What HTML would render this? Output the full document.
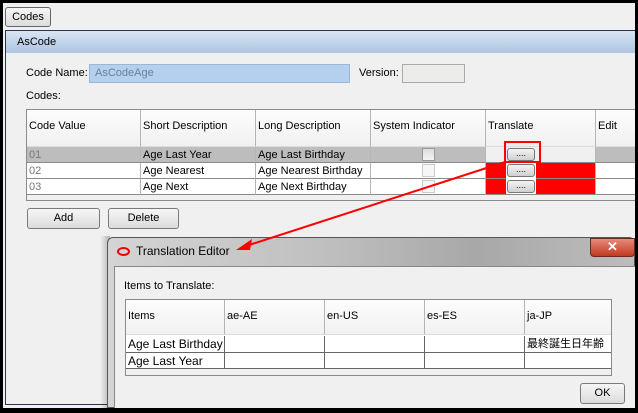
<!DOCTYPE html>
<html><head><meta charset="utf-8"><style>
*{margin:0;padding:0;box-sizing:border-box}
body{width:638px;height:413px;background:#000;position:relative;overflow:hidden;font-family:"Liberation Sans","Noto Sans CJK JP",sans-serif;font-size:11px;color:#000}
.a{position:absolute}
.cell{position:absolute;border-right:1px solid #b5b5b5;border-bottom:1px solid #8a8a8a;padding-left:2px;line-height:16px;white-space:nowrap;overflow:hidden}
.btn{position:absolute;border:1px solid #7a7a7a;border-radius:3px;background:linear-gradient(#f6f6f6,#dcdcdc);text-align:center}
.dots{position:absolute;width:28px;height:13px;border:1px solid #777;border-radius:3px;background:linear-gradient(#f4f4f4,#cfcfcf);font-size:9px;line-height:9px;text-align:center}
</style></head><body>
<div class="a" style="left:3px;top:3px;width:632px;height:405px;background:#f0f0f0"></div>
<div class="btn" style="left:5px;top:7px;width:46px;height:20px;line-height:18px;font-size:11px;border-color:#666">Codes</div>
<div class="a" style="left:5px;top:30px;width:630px;height:375px;border:1px solid #2a3550;border-right:none;background:#f0f0f0"></div>
<div class="a" style="left:6px;top:31px;width:629px;height:22px;background:linear-gradient(#d9e5f4,#aec4e0);padding-left:11px;line-height:22px;font-size:11px">AsCode</div>
<div class="a" style="left:26px;top:67px">Code Name:</div>
<div class="a" style="left:89px;top:64px;width:261px;height:19px;background:#b5d0ef;border:1px solid #9fb7d6;color:#6a7f9a;padding-left:5px;line-height:17px">AsCodeAge</div>
<div class="a" style="left:359px;top:67px">Version:</div>
<div class="a" style="left:402px;top:64px;width:63px;height:19px;background:#ececea;border:1px solid #aaa"></div>
<div class="a" style="left:26px;top:90px">Codes:</div>
<div class="a" style="left:26px;top:109px;width:610px;height:92px;border:1px solid #8a8a8a;border-right:none;background:#fff"></div>
<div class="a" style="left:27px;top:110px;width:608px;height:37px;background:linear-gradient(#fdfdfd,#f0f0f0)"></div>
<div class="cell" style="left:27px;top:110px;width:114px;height:37px;line-height:33px;border-bottom-color:#ddd">Code Value</div>
<div class="cell" style="left:141px;top:110px;width:115px;height:37px;line-height:33px;border-bottom-color:#ddd">Short Description</div>
<div class="cell" style="left:256px;top:110px;width:115px;height:37px;line-height:33px;border-bottom-color:#ddd">Long Description</div>
<div class="cell" style="left:371px;top:110px;width:115px;height:37px;line-height:33px;border-bottom-color:#ddd">System Indicator</div>
<div class="cell" style="left:486px;top:110px;width:110px;height:37px;line-height:33px;border-bottom-color:#ddd">Translate</div>
<div class="cell" style="left:596px;top:110px;width:40px;height:37px;line-height:33px;border-bottom-color:#ddd">Edit</div>
<div class="a" style="left:27px;top:147px;width:608px;height:16px;background:#bdbdbd"></div>
<div class="cell" style="left:27px;top:147px;width:114px;height:16px;color:#777">01</div>
<div class="cell" style="left:141px;top:147px;width:115px;height:16px">Age Last Year</div>
<div class="cell" style="left:256px;top:147px;width:115px;height:16px">Age Last Birthday</div>
<div class="cell" style="left:371px;top:147px;width:115px;height:16px"></div>
<div class="cell" style="left:486px;top:147px;width:110px;height:16px;background:#f0f0f0"></div>
<div class="cell" style="left:596px;top:147px;width:40px;height:16px"></div>
<div class="cell" style="left:27px;top:163px;width:114px;height:16px;color:#777">02</div>
<div class="cell" style="left:141px;top:163px;width:115px;height:16px">Age Nearest</div>
<div class="cell" style="left:256px;top:163px;width:115px;height:16px">Age Nearest Birthday</div>
<div class="cell" style="left:371px;top:163px;width:115px;height:16px"></div>
<div class="cell" style="left:486px;top:163px;width:110px;height:16px;background:#f00"></div>
<div class="cell" style="left:596px;top:163px;width:40px;height:16px"></div>
<div class="cell" style="left:27px;top:179px;width:114px;height:16px;color:#777">03</div>
<div class="cell" style="left:141px;top:179px;width:115px;height:16px">Age Next</div>
<div class="cell" style="left:256px;top:179px;width:115px;height:16px">Age Next Birthday</div>
<div class="cell" style="left:371px;top:179px;width:115px;height:16px"></div>
<div class="cell" style="left:486px;top:179px;width:110px;height:16px;background:#f00"></div>
<div class="cell" style="left:596px;top:179px;width:40px;height:16px"></div>
<div class="a" style="left:27px;top:195px;width:608px;height:5px;background:#f0f0f0"></div>
<div class="a" style="left:422px;top:148px;width:13px;height:13px;border:1px solid #999;background:linear-gradient(#ddd,#f4f4f4)"></div>
<div class="a" style="left:422px;top:164px;width:13px;height:13px;border:1px solid #ccc;background:#f6f6f6"></div>
<div class="a" style="left:422px;top:180px;width:13px;height:13px;border:1px solid #ccc;background:#f6f6f6"></div>
<div class="a" style="left:506px;top:163px;width:30px;height:31px;background:#fff"></div>
<div class="dots" style="left:507px;top:148px">....</div>
<div class="dots" style="left:507px;top:164px">....</div>
<div class="dots" style="left:507px;top:180px">....</div>
<div class="a" style="left:504px;top:141px;width:37px;height:22px;border:2px solid #f00"></div>
<div class="btn" style="left:27px;top:208px;width:73px;height:21px;line-height:19px">Add</div>
<div class="btn" style="left:108px;top:208px;width:71px;height:21px;line-height:19px">Delete</div>
<div class="a" style="left:100px;top:236px;width:10px;height:172px;background:linear-gradient(90deg,rgba(0,0,0,0),rgba(0,0,0,.25))"></div>
<div class="a" style="left:107px;top:237px;width:528px;height:171px;border:1px solid #555;border-radius:6px 6px 0 0;background:linear-gradient(90deg,#d4d4d4,#c0c0c0 40%,#a8a8a8 70%,#bdbdbd)"></div>
<div class="a" style="left:117px;top:247px;width:13px;height:9px;border:2px solid #e00;border-radius:50%"></div>
<div class="a" style="left:136px;top:244px;font-size:12px">Translation Editor</div>
<div class="a" style="left:590px;top:238px;width:45px;height:19px;background:linear-gradient(#e88a7a,#c23a22);border:1px solid #6a2a20;border-radius:0 0 4px 4px;color:#fff;font-weight:bold;text-align:center;font-size:13px;line-height:16px">✕</div>
<div class="a" style="left:114px;top:266px;width:521px;height:142px;background:#f0f0f0;border-top:1px solid #888;border-left:1px solid #888"></div>
<div class="a" style="left:124px;top:280px">Items to Translate:</div>
<div class="a" style="left:125px;top:299px;width:487px;height:77px;border:1px solid #8a8a8a;background:#fff"></div>
<div class="a" style="left:126px;top:300px;width:485px;height:35px;background:linear-gradient(#fdfdfd,#f0f0f0)"></div>
<div class="cell" style="left:126px;top:300px;width:99px;height:35px;line-height:33px;border-bottom-color:#ddd">Items</div>
<div class="cell" style="left:225px;top:300px;width:100px;height:35px;line-height:33px;border-bottom-color:#ddd">ae-AE</div>
<div class="cell" style="left:325px;top:300px;width:100px;height:35px;line-height:33px;border-bottom-color:#ddd">en-US</div>
<div class="cell" style="left:425px;top:300px;width:100px;height:35px;line-height:33px;border-bottom-color:#ddd">es-ES</div>
<div class="cell" style="left:525px;top:300px;width:86px;height:35px;line-height:33px;border-bottom-color:#ddd;border-right:none">ja-JP</div>
<div class="cell" style="left:126px;top:336px;width:99px;height:17px;font-size:12px;border-right-color:#666;border-bottom-color:#666">Age Last Birthday</div>
<div class="cell" style="left:225px;top:336px;width:100px;height:17px;border-right-color:#666;border-bottom-color:#666"></div>
<div class="cell" style="left:325px;top:336px;width:100px;height:17px;border-right-color:#666;border-bottom-color:#666"></div>
<div class="cell" style="left:425px;top:336px;width:100px;height:17px;border-right-color:#666;border-bottom-color:#666"></div>
<div class="cell" style="left:525px;top:336px;width:86px;height:17px;border-right:none;border-bottom-color:#666;font-size:11px">最終誕生日年齢</div>
<div class="cell" style="left:126px;top:353px;width:99px;height:16px;font-size:12px;border-right-color:#666;border-bottom-color:#666">Age Last Year</div>
<div class="cell" style="left:225px;top:353px;width:100px;height:16px;border-right-color:#666;border-bottom-color:#666"></div>
<div class="cell" style="left:325px;top:353px;width:100px;height:16px;border-right-color:#666;border-bottom-color:#666"></div>
<div class="cell" style="left:425px;top:353px;width:100px;height:16px;border-right-color:#666;border-bottom-color:#666"></div>
<div class="cell" style="left:525px;top:353px;width:86px;height:16px;border-right:none;border-bottom-color:#666"></div>
<div class="a" style="left:126px;top:369px;width:485px;height:6px;background:#f0f0f0"></div>
<div class="btn" style="left:580px;top:383px;width:45px;height:21px;line-height:19px">OK</div>
<div class="a" style="left:635px;top:0;width:3px;height:413px;background:#000"></div>
<div class="a" style="left:0;top:408px;width:638px;height:5px;background:#000"></div>
<svg class="a" style="left:0;top:0" width="638" height="413">
<line x1="505" y1="162" x2="246" y2="246" stroke="#f00" stroke-width="2"/>
<polygon points="236,250 252,239 250,250" fill="#f00"/>
</svg>
</body></html>
